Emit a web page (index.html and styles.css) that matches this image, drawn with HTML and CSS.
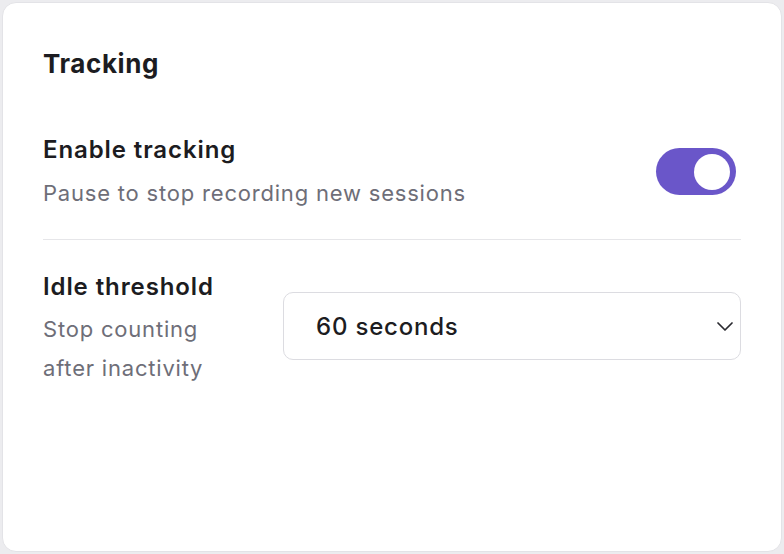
FILE: index.html
```html
<!DOCTYPE html>
<html lang="en">
<head>
	<meta charset="UTF-8">
	<title>Tracking settings</title>
	<link rel="stylesheet" href="styles.css">
</head>
<body>
	<div class="card">
		<h2 class="card-title">Tracking</h2>

		<div class="setting setting-toggle">
			<div class="setting-text">
				<div class="setting-label">Enable tracking</div>
				<div class="setting-hint">Pause to stop recording new sessions</div>
			</div>
			<button class="toggle on" aria-pressed="true"><span class="knob"></span></button>
		</div>

		<div class="setting setting-select">
			<div class="setting-text narrow">
				<div class="setting-label">Idle threshold</div>
				<div class="setting-hint">Stop counting after inactivity</div>
			</div>
			<div class="select">
				<span>60 seconds</span>
				<svg width="16" height="9" viewBox="0 0 16 9" fill="none">
					<path d="M1 1 L8 8 L15 1" stroke="#2a2a30" stroke-width="1.7" stroke-linecap="round" stroke-linejoin="round"/>
				</svg>
			</div>
		</div>
	</div>
</body>
</html>
```

FILE: styles.css
```css
* {
	box-sizing: border-box;
}

body {
	margin: 0;
	padding: 2px;
	height: 554px;
	background-color: #ececef;
	font-family: Inter, 'Noto Sans', sans-serif;
	color: #1c1c21;
}

.card {
	height: 100%;
	background-color: #ffffff;
	border: 1px solid #e3e3e7;
	border-radius: 14px;
	padding: 44px 40px 40px 40px;
}

.card-title {
	margin: 0 0 53px 0;
	font-size: 26px;
	font-weight: 700;
	line-height: 34px;
	letter-spacing: 0.6px;
}

.setting {
	display: flex;
	align-items: center;
}

.setting-toggle {
	justify-content: space-between;
	padding-bottom: 30px;
	border-bottom: 1px solid #e6e6e9;
}

.setting-label {
	font-size: 24px;
	font-weight: 600;
	line-height: 32px;
	letter-spacing: 0.9px;
}

.setting-hint {
	margin-top: 7px;
	font-size: 22px;
	line-height: 39px;
	letter-spacing: 0.8px;
	color: #6e6e78;
}

.setting-toggle .setting-hint {
	margin-top: 11px;
	line-height: 32px;
}

.toggle {
	width: 80px;
	height: 47px;
	margin-right: 5px;
	padding: 0;
	border: none;
	border-radius: 24px;
	background-color: #6a56c9;
	position: relative;
	cursor: pointer;
}

.toggle .knob {
	position: absolute;
	top: 5.5px;
	right: 6px;
	width: 36px;
	height: 36px;
	border-radius: 50%;
	background-color: #ffffff;
}

.setting-select {
	align-items: flex-start;
	gap: 30px;
	padding-top: 31px;
}

.narrow {
	width: 210px;
}

.select {
	flex: 1;
	height: 68px;
	margin-top: 21px;
	display: flex;
	align-items: center;
	justify-content: space-between;
	padding: 0 7px 0 32px;
	border: 1.5px solid #dcdce1;
	border-radius: 10px;
	font-size: 24px;
	font-weight: 500;
	letter-spacing: 0.8px;
}
```
